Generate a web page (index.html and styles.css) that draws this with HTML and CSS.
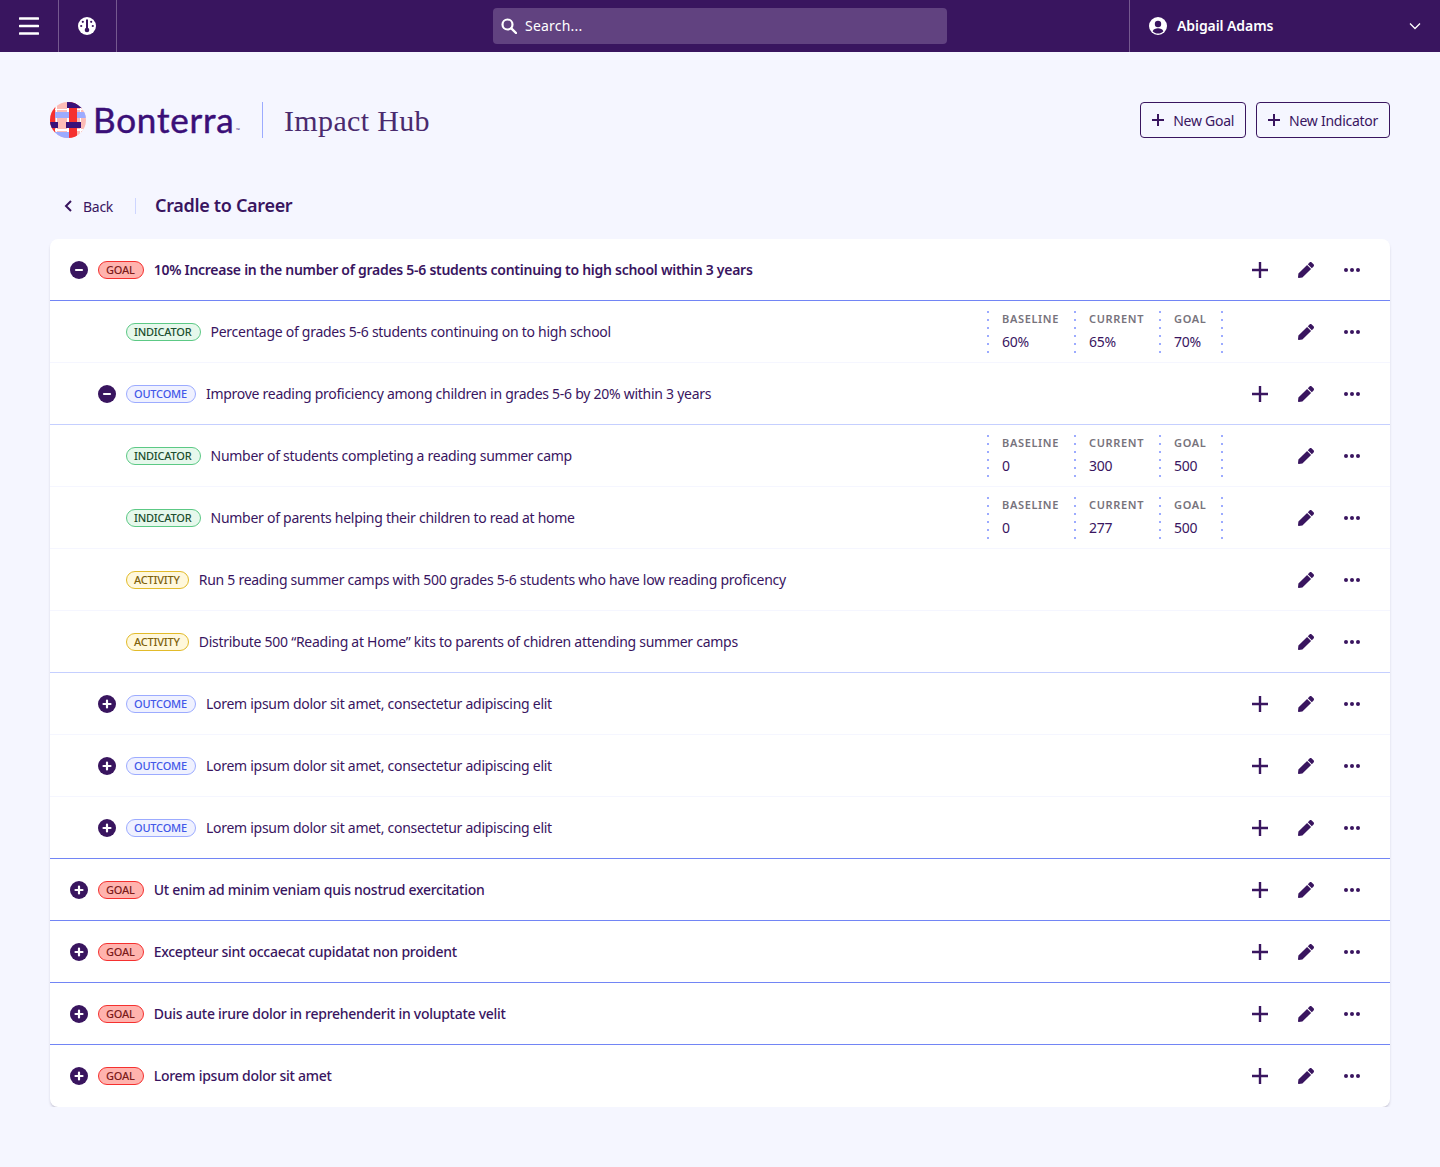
FILE: index.html
```html
<!DOCTYPE html>
<html lang="en">
<head>
    <meta charset="UTF-8">
    <title>Impact Hub – Cradle to Career</title>
    <link rel="stylesheet" href="styles.css">
</head>
<body>
<svg class="sprites" width="0" height="0">
    <symbol id="i-plus" viewBox="0 0 18 18"><path d="M9 1v16M1 9h16" fill="none" stroke="currentColor" stroke-width="2.4"/></symbol>
    <symbol id="i-plus-sm" viewBox="0 0 12 12"><path d="M6 0v12M0 6h12" fill="none" stroke="currentColor" stroke-width="2"/></symbol>
    <symbol id="i-pen" viewBox="0 0 512 512"><path fill="currentColor" d="M290.7 93.2l128 128-278 278-114.100 12.600C11.300 513.500-1.600 500.600.100 485.300l12.700-114.200 277.900-277.900zm207.200-19.100l-60.100-60.100c-18.700-18.700-49.100-18.700-67.900 0l-56.500 56.500 128 128 56.500-56.500c18.800-18.800 18.800-49.200 0-67.900z"/></symbol>
    <symbol id="i-dots" viewBox="0 0 16 4"><circle cx="2" cy="2" r="2" fill="currentColor"/><circle cx="8" cy="2" r="2" fill="currentColor"/><circle cx="14" cy="2" r="2" fill="currentColor"/></symbol>
    <symbol id="i-open" viewBox="0 0 18 18"><circle cx="9" cy="9" r="9" fill="currentColor"/><path d="M6 9h6" stroke="#fff" stroke-width="2.200" stroke-linecap="round"/></symbol>
    <symbol id="i-closed" viewBox="0 0 18 18"><circle cx="9" cy="9" r="9" fill="currentColor"/><path d="M5.500 9h7M9 5.500v7" stroke="#fff" stroke-width="2.200" stroke-linecap="round"/></symbol>
</svg>

<header class="topbar">
    <button class="bar-btn menu-btn" aria-label="Menu">
        <svg width="20" height="18" viewBox="0 0 20 18"><path d="M1 1.500h18M1 9h18M1 16.500h18" stroke="#fff" stroke-width="2.600" stroke-linecap="round"/></svg>
    </button>
    <button class="bar-btn dash-btn" aria-label="Dashboard">
        <svg width="18" height="18" viewBox="0 0 18 18"><circle cx="9" cy="9" r="9" fill="#fff"/><g fill="#39155f"><rect x="8" y="2.500" width="2" height="9"/><circle cx="9" cy="13" r="2.300"/><circle cx="4.800" cy="4.800" r="1.100"/><circle cx="13.200" cy="4.800" r="1.100"/><circle cx="3.200" cy="9" r="1.100"/><circle cx="14.800" cy="9" r="1.100"/></g></svg>
    </button>
    <div class="search-wrap">
        <div class="search">
            <svg width="16" height="16" viewBox="0 0 16 16"><circle cx="6.500" cy="6.500" r="5" fill="none" stroke="#fff" stroke-width="2.200"/><path d="M10.300 10.300L15 15" stroke="#fff" stroke-width="2.400" stroke-linecap="round"/></svg>
            <span>Search...</span>
        </div>
    </div>
    <div class="user">
        <svg width="18" height="18" viewBox="0 0 18 18"><circle cx="9" cy="9" r="9" fill="#fff"/><circle cx="9" cy="7" r="3.200" fill="#39155f"/><path d="M3.600 14.200c1-2.200 3-3 5.400-3s4.400.8 5.400 3c-1.400 1.400-3.300 2.300-5.400 2.300s-4-.9-5.400-2.300z" fill="#39155f"/></svg>
        <span class="user-name">Abigail Adams</span>
        <svg class="caret" width="12" height="8" viewBox="0 0 12 8"><path d="M1 1.500l5 5 5-5" fill="none" stroke="#fff" stroke-width="1.300"/></svg>
    </div>
</header>

<main>
    <div class="brand-row">
        <div class="brand">
            <svg class="logo-mark" width="36" height="36" viewBox="0 0 36 36">
                <defs><clipPath id="logoClip"><circle cx="18" cy="18" r="18"/></clipPath></defs>
                <g clip-path="url(#logoClip)">
                    <rect width="36" height="36" fill="#fcbcb6"/>
                    <path d="M6 0h1v36H6zM17 0h2v36h-2zM30 0h1v36h-1zM0 7h36v1H0zM0 27h36v2H0z" fill="#fff"/>
                    <rect x="5" y="10" width="31" height="6" fill="#9cabff"/>
                    <rect x="0" y="0" width="5" height="36" fill="#f5302f"/>
                    <rect x="19" y="0" width="8" height="36" fill="#f5302f"/>
                    <rect x="17" y="0" width="15" height="6" fill="#39117a"/>
                    <rect x="0" y="20" width="8" height="6" fill="#39117a"/>
                    <rect x="16" y="20" width="15" height="6" fill="#39117a"/>
                    <rect x="5" y="30" width="14" height="6" fill="#9cabff"/>
                </g>
            </svg>
            <span class="logo-word">Bonterra</span><span class="logo-tm">™</span>
            <span class="brand-line"></span>
            <span class="product">Impact Hub</span>
        </div>
        <div class="brand-actions">
            <button class="outline-btn"><svg width="12" height="12"><use href="#i-plus-sm"/></svg>New Goal</button>
            <button class="outline-btn"><svg width="12" height="12"><use href="#i-plus-sm"/></svg>New Indicator</button>
        </div>
    </div>

    <div class="crumbs">
        <a class="back" href="#"><svg width="8" height="12" viewBox="0 0 8 12"><path d="M7 1L2 6l5 5" fill="none" stroke="currentColor" stroke-width="2"/></svg>Back</a>
        <h1>Cradle to Career</h1>
    </div>

    <div class="tree" id="tree"></div>
</main>

<script>
// Tree data: type, level, text, toggle state, measures
const rows = [
    { type: 'goal', text: '10% Increase in the number of grades 5-6 students continuing to high school within 3 years', toggle: 'open', add: true, bold: true, line: 'strong' },
    { type: 'indicator', text: 'Percentage of grades 5-6 students continuing on to high school', stats: ['60%', '65%', '70%'], line: 'faint' },
    { type: 'outcome', text: 'Improve reading proficiency among children in grades 5-6 by 20% within 3 years', toggle: 'open', add: true, line: 'soft' },
    { type: 'indicator', text: 'Number of students completing a reading summer camp', stats: ['0', '300', '500'], line: 'faint' },
    { type: 'indicator', text: 'Number of parents helping their children to read at home', stats: ['0', '277', '500'], line: 'faint' },
    { type: 'activity', text: 'Run 5 reading summer camps with 500 grades 5-6 students who have low reading proficency', line: 'faint' },
    { type: 'activity', text: 'Distribute 500 “Reading at Home” kits to parents of chidren attending summer camps', line: 'soft' },
    { type: 'outcome', text: 'Lorem ipsum dolor sit amet, consectetur adipiscing elit', toggle: 'closed', add: true, line: 'faint' },
    { type: 'outcome', text: 'Lorem ipsum dolor sit amet, consectetur adipiscing elit', toggle: 'closed', add: true, line: 'faint' },
    { type: 'outcome', text: 'Lorem ipsum dolor sit amet, consectetur adipiscing elit', toggle: 'closed', add: true, line: 'strong' },
    { type: 'goal', text: 'Ut enim ad minim veniam quis nostrud exercitation', toggle: 'closed', add: true, line: 'strong' },
    { type: 'goal', text: 'Excepteur sint occaecat cupidatat non proident', toggle: 'closed', add: true, line: 'strong' },
    { type: 'goal', text: 'Duis aute irure dolor in reprehenderit in voluptate velit', toggle: 'closed', add: true, line: 'strong' },
    { type: 'goal', text: 'Lorem ipsum dolor sit amet', toggle: 'closed', add: true, line: 'none' }
];

const labels = ['Baseline', 'Current', 'Goal'];

function icon(name, w, h) {
    return `<svg width="${w}" height="${h}"><use href="#i-${name}"/></svg>`;
}

function statsHtml(values) {
    return `<div class="stats">` + values.map((v, i) => `
        <div class="stat stat-${i}"><span class="stat-label">${labels[i]}</span><span class="stat-value">${v}</span></div>
    `).join('') + `</div>`;
}

document.getElementById('tree').innerHTML = rows.map(r => `
    <div class="row row-${r.type} line-${r.line}">
        ${r.toggle ? `<span class="toggle">${icon(r.toggle, 18, 18)}</span>` : ''}
        <span class="tag tag-${r.type}">${r.type}</span>
        <span class="row-text${r.bold ? ' bold' : ''}">${r.text}</span>
        ${r.stats ? statsHtml(r.stats) : ''}
        <div class="row-actions">
            <span class="act">${r.add ? icon('plus', 18, 18) : ''}</span>
            <span class="act">${icon('pen', 16, 16)}</span>
            <span class="act">${icon('dots', 16, 4)}</span>
        </div>
    </div>
`).join('');
</script>
</body>
</html>
```

FILE: styles.css
```css
* { box-sizing: border-box; }
body { margin: 0; background: #f5f6ff; color: #39155f; font-family: "Noto Sans", sans-serif; font-size: 14px; letter-spacing: -.27px; }
button { font-family: inherit; letter-spacing: inherit; cursor: pointer; }
.sprites { position: absolute; }

/* top bar */
.topbar { display: flex; align-items: stretch; height: 52px; background: #39155f; color: #fff; }
.bar-btn { display: flex; align-items: center; justify-content: center; background: none; border: 0; border-right: 1px solid #75598f; padding: 0; }
.menu-btn { width: 59px; }
.dash-btn { width: 58px; padding-right: 2px; }
.search-wrap { flex: 1; display: flex; align-items: center; padding-left: 376px; }
.search { display: flex; align-items: center; gap: 8px; width: 454px; height: 36px; padding: 0 8px; background: #614280; border-radius: 4px; font-size: 14px; letter-spacing: .2px; }
.search span { margin-top: -2px; }
.user { display: flex; align-items: center; width: 311px; padding: 0 19px; border-left: 1px solid #75598f; }
.user-name { margin: -2px 0 0 10px; font-weight: 600; font-size: 14px; letter-spacing: -.08px; }
.caret { margin-left: auto; }

main { padding: 0 50px; }

/* brand */
.brand-row { display: flex; justify-content: space-between; align-items: center; height: 36px; margin-top: 50px; }
.brand { display: flex; align-items: center; }
.logo-word { width: 141px; margin: -2px 0 0 7px; font-family: Lato, sans-serif; font-size: 35px; line-height: 36px; color: #3b0f78; letter-spacing: .8px; -webkit-text-stroke: .5px #3b0f78; }
.logo-tm { align-self: flex-end; width: 9px; padding-left: 2px; font-size: 5px; letter-spacing: 0; color: #3b0f78; margin-bottom: 5px; }
.brand-line { width: 1px; height: 36px; margin: 0 21px 0 19px; background: #9cabff; }
.product { margin-top: 1px; font-family: "Liberation Serif", serif; font-size: 30px; letter-spacing: .35px; color: #4a2a6e; }
.brand-actions { display: flex; gap: 10px; }
.outline-btn { display: flex; align-items: center; gap: 9px; height: 36px; padding: 0 11px; background: none; border: 1px solid #39155f; border-radius: 4px; color: #39155f; font-size: 14px; }

/* breadcrumb */
.crumbs { display: flex; align-items: center; height: 24px; margin-top: 56px; padding-left: 14px; }
.back { display: flex; align-items: center; gap: 11px; width: 72px; border-right: 1px solid #cdd5ff; color: #39155f; font-size: 14px; text-decoration: none; height: 16px; }
.crumbs h1 { margin: -2px 0 0 19px; font-size: 18px; font-weight: 600; letter-spacing: -.32px; }

/* tree */
.tree { margin-top: 21px; background: #fff; border-radius: 8px; box-shadow: 0 2px 3px -1px rgba(40, 30, 70, .35); overflow: hidden; }
.row { display: flex; align-items: center; height: 62px; border-bottom: 1px solid transparent; }
.line-strong { border-bottom-color: #7285f5; }
.line-soft { border-bottom-color: #c5cfff; }
.line-faint { border-bottom-color: #f5f6ff; }
.row-goal { padding-left: 20px; }
.row-outcome { padding-left: 48px; }
.row-indicator, .row-activity { padding-left: 76px; }
.toggle { display: flex; width: 18px; margin-right: 10px; }
.tag { display: inline-block; height: 18px; padding: 0 8px 0 7px; border: 1px solid; border-radius: 9px; font-size: 11px; line-height: 16px; letter-spacing: -.2px; text-transform: uppercase; font-weight: 500; }
.tag-goal { background: #ffb3ae; border-color: #f5302f; color: #7c1a1a; }
.tag-indicator { background: #e6f8ec; border-color: #5cc985; color: #1d4f30; }
.tag-outcome { background: #eff1ff; border-color: #9cabff; color: #4258e8; }
.tag-activity { background: #fff8dc; border-color: #e2bb2a; color: #80620b; }
.row-text { margin-left: 10px; font-size: 14px; }
.row-goal .row-text { font-weight: 500; }
.row-goal .row-text.bold { font-weight: 600; }

/* measures */
.stats { display: flex; margin: 0 14px 0 auto; height: 42px; padding-right: 2px; background: linear-gradient(#9cabff 2px, transparent 2px) right top / 2px 8px repeat-y; }
.stat { display: flex; flex-direction: column; padding-left: 15px; background: linear-gradient(#9cabff 2px, transparent 2px) left top / 2px 8px repeat-y; }
.stat-0 { width: 87px; }
.stat-1 { width: 85px; }
.stat-2 { width: 62px; }
.stat-label { font-size: 11px; font-weight: 600; line-height: 15px; letter-spacing: .65px; text-transform: uppercase; color: #77737c; }
.stat-value { font-size: 14px; line-height: 19px; margin-top: 6px; }

/* row actions */
.row-actions { display: flex; margin-left: auto; padding-right: 15px; }
.stats + .row-actions { margin-left: 0; }
.act { display: flex; align-items: center; justify-content: center; width: 46px; height: 24px; color: #39155f; }
```
